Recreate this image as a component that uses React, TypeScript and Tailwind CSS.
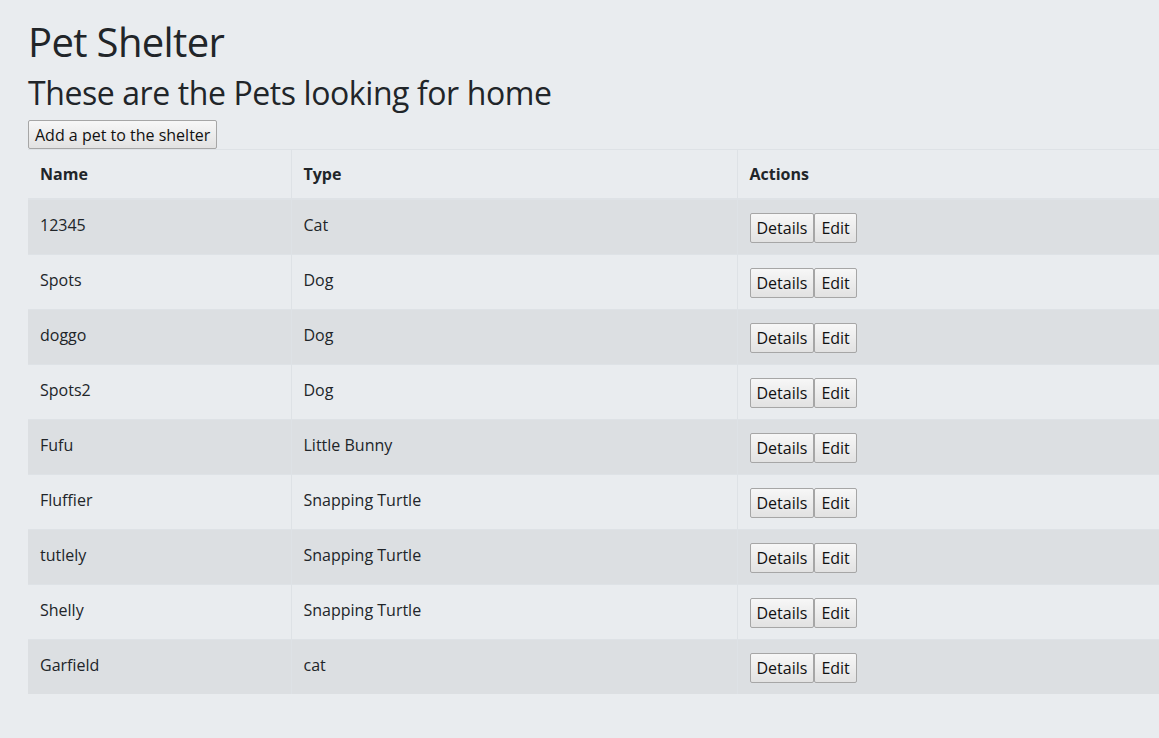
const pets = [
  { name: "12345", type: "Cat" },
  { name: "Spots", type: "Dog" },
  { name: "doggo", type: "Dog" },
  { name: "Spots2", type: "Dog" },
  { name: "Fufu", type: "Little Bunny" },
  { name: "Fluffier", type: "Snapping Turtle" },
  { name: "tutlely", type: "Snapping Turtle" },
  { name: "Shelly", type: "Snapping Turtle" },
  { name: "Garfield", type: "cat" },
];

const btn =
  "border border-[#a6a6a6] rounded-[2px] bg-gradient-to-b from-[#f7f7f7] to-[#e2e2e2] px-[6px] leading-6 text-[#111]";

export default function App() {
  return (
    <div
      className="min-h-[738px] bg-[#e9ecef] pt-[18px] pl-[28px] text-[#212529] overflow-hidden"
      style={{ fontFamily: '"Open Sans", "Noto Sans", sans-serif' }}
    >
      <h1 className="text-[40px] leading-[48px] font-medium tracking-[-0.016em] mb-2">Pet Shelter</h1>
      <h2 className="text-[32px] leading-[38.4px] font-medium tracking-[-0.013em] mb-2">
        These are the Pets looking for home
      </h2>
      <button className={btn + " text-base h-[29px] block"}>Add a pet to the shelter</button>
      <table className="w-full border-collapse text-base leading-6">
        <thead>
          <tr>
            <th className="w-[263px] text-left font-bold p-3 border-t border-b-2 border-r border-[#dee2e6]">
              Name
            </th>
            <th className="w-[446px] text-left font-bold p-3 border-t border-b-2 border-r border-[#dee2e6]">
              Type
            </th>
            <th className="text-left font-bold p-3 border-t border-b-2 border-[#dee2e6]">
              Actions
            </th>
          </tr>
        </thead>
        <tbody>
          {pets.map((p, i) => (
            <tr key={i} className={i % 2 === 0 ? "bg-[#dcdfe2]" : ""}>
              <td className="px-3 pt-[13px] pb-3 align-top border-t border-r border-[#dee2e6]">{p.name}</td>
              <td className="px-3 pt-[13px] pb-3 align-top border-t border-r border-[#dee2e6]">{p.type}</td>
              <td className="px-3 pt-[13px] pb-[11px] align-top border-t border-[#dee2e6]">
                <div className="flex">
                  <button className={btn + " h-[30px]"}>Details</button>
                  <button className={btn + " h-[30px]"}>Edit</button>
                </div>
              </td>
            </tr>
          ))}
        </tbody>
      </table>
    </div>
  );
}
